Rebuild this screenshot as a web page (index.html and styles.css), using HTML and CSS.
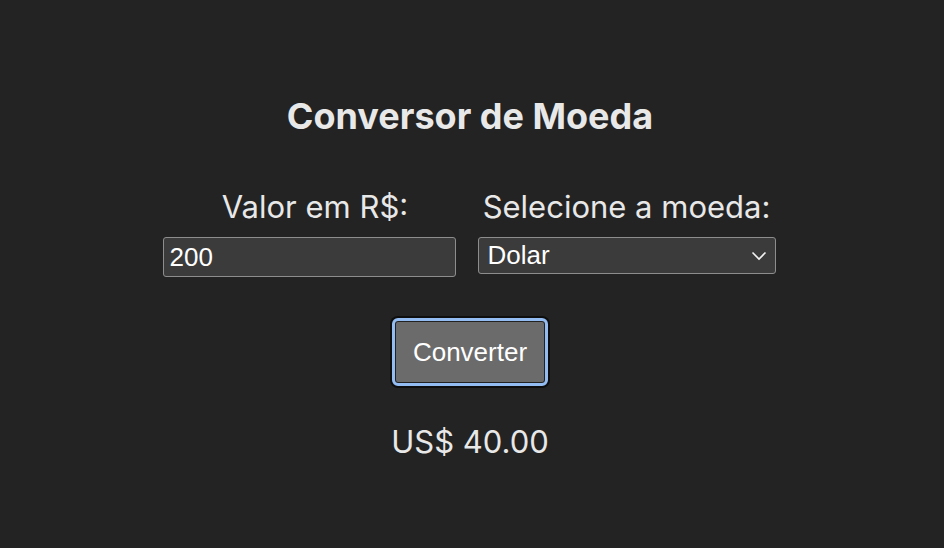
FILE: index.html
```html
<!DOCTYPE html>
<html lang="pt">
<head>
<meta charset="utf-8">
<link rel="stylesheet" href="styles.css">
</head>
<body>
<main class="app">
  <h1 class="title">Conversor de Moeda</h1>
  <div class="fields">
    <div class="field">
      <label class="label label-first" for="valor">Valor em R$:</label>
      <input class="input" id="valor" type="text" value="200">
    </div>
    <div class="field">
      <label class="label" for="moeda">Selecione a moeda:</label>
      <div class="select">
        <span>Dolar</span>
        <svg class="chev" width="16" height="10" viewBox="0 0 16 10"><path d="M1.5 1.5 L8 8 L14.5 1.5" fill="none" stroke="#f2f2f2" stroke-width="1.6"/></svg>
      </div>
    </div>
  </div>
  <button class="btn">Converter</button>
  <p class="result">US$ 40.00</p>
</main>
</body>
</html>
```
FILE: styles.css
```css
html, body { margin: 0; padding: 0; }
body {
  background: #232323;
  width: 944px;
  height: 548px;
  font-family: Inter, "Noto Sans", sans-serif;
  color: #e8e8e8;
}
.app {
  display: flex;
  flex-direction: column;
  align-items: center;
  padding-top: 94px;
  padding-right: 4px;
}
.title {
  margin: 0;
  font-size: 36px;
  font-weight: 700;
  line-height: 44px;
  color: #e8e8e8;
}
.fields {
  display: flex;
  align-items: flex-start;
  gap: 22px;
  margin-top: 50px;
  margin-left: -2px;
}
.field {
  display: flex;
  flex-direction: column;
  align-items: center;
}
.label {
  font-size: 31px;
  line-height: 38px;
  color: #e8e8e8;
  margin-bottom: 11px;
}
.label-first { margin-left: 12px; }
.input {
  box-sizing: border-box;
  width: 293px;
  height: 40px;
  background: #3b3b3b;
  border: 1.5px solid #8d8d8d;
  border-radius: 3px;
  color: #ffffff;
  font-family: "Liberation Sans", Arial, sans-serif;
  font-size: 26px;
  padding: 0 6px;
  outline: none;
}
.select {
  box-sizing: border-box;
  width: 298px;
  height: 37px;
  background: #3b3b3b;
  border: 1.5px solid #8d8d8d;
  border-radius: 3px;
  color: #ffffff;
  font-family: "Liberation Sans", Arial, sans-serif;
  font-size: 26px;
  display: flex;
  align-items: center;
  justify-content: space-between;
  padding: 0 8px 0 9px;
}
.btn {
  margin-top: 41px;
  box-sizing: border-box;
  width: 156px;
  height: 68px;
  background: #6b6b6b;
  border: 3px solid #93bcf3;
  border-radius: 6px;
  box-shadow: 0 0 0 2px #0e0e0e, inset 0 0 0 1px #222;
  color: #ffffff;
  font-family: "Liberation Sans", Arial, sans-serif;
  font-size: 26px;
  padding: 0;
}
.result {
  margin: 36px 0 0;
  font-size: 31px;
  line-height: 40px;
  color: #e8e8e8;
}
```
